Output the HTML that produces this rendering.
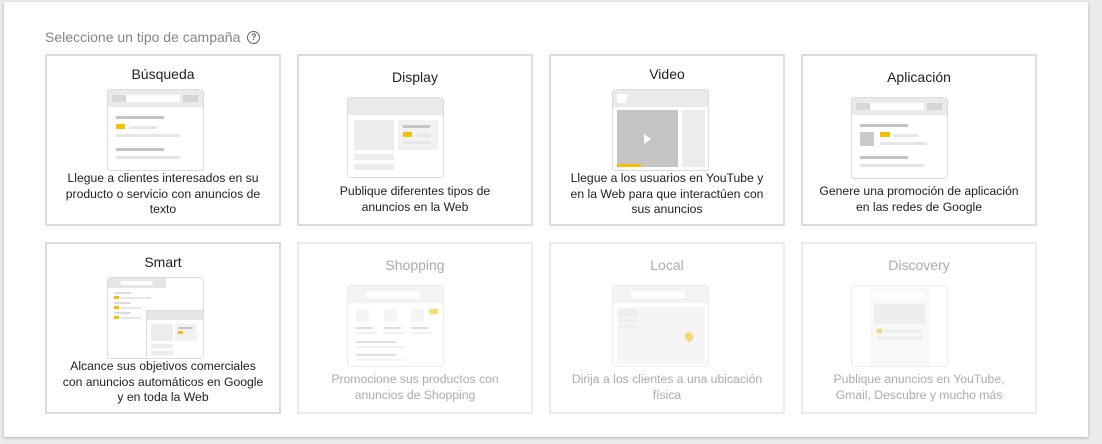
<!DOCTYPE html>
<html><head><meta charset="utf-8"><style>
*{margin:0;padding:0;box-sizing:border-box}
body{width:1102px;height:444px;background:#ebebeb;font-family:"Liberation Sans",Arial,sans-serif;position:relative;overflow:hidden}
.panel{position:absolute;left:4px;top:2px;width:1084px;height:435px;background:#fff;box-shadow:0 1px 3px rgba(0,0,0,.25)}
.lbl{position:absolute;left:45px;top:29px;font-size:14px;color:#80868b}
.q{display:inline-block;width:13px;height:13px;border:1.5px solid #5f6368;border-radius:50%;font-size:9px;line-height:10px;text-align:center;color:#5f6368;font-weight:bold;vertical-align:2px;margin-left:3px}
.card{position:absolute;width:236px;height:172px;border:2px solid #dadce0;background:#fff}
.card.d{border-color:#ececf0}
.t{position:absolute;left:0;right:0;text-align:center;font-size:14px;color:#202124}
.s{position:absolute;left:0;right:0;text-align:center;font-size:12.2px;line-height:15.5px;color:#202124}
.d .t,.d .s{color:#a8abaf}
.ill{position:absolute;width:97px;height:82px;border:1px solid #dadce0;border-radius:3px;background:#fff;overflow:hidden}
.d .ill{border-color:#ececf0}
.ill div{position:absolute}
.hd{left:0;top:0;width:100%;height:17px;background:#e8eaeb}
.g{background:#c4c4c4}.l{background:#e6e6e6}.y{background:#fbbc04}.w{background:#fff}.m{background:#ececec}
.fd div{opacity:.55}
</style></head><body>
<div class="panel"></div>
<div class="lbl">Seleccione un tipo de campaña <span class="q">?</span></div>

<div class="card" style="left:45px;top:54px">
 <div class="t" style="top:10px">Búsqueda</div>
 <div class="ill" style="left:60px;top:33px">
  <div class="hd"></div><div class="g" style="left:4px;top:5px;width:14px;height:7px;opacity:.5"></div>
  <div class="w" style="left:18px;top:5px;width:54px;height:7px"></div><div class="g" style="left:75px;top:5px;width:15px;height:7px;opacity:.6"></div>
  <div class="g" style="left:8px;top:26px;width:48px;height:3px"></div>
  <div class="y" style="left:8px;top:34px;width:9px;height:5px"></div><div class="l" style="left:21px;top:36px;width:28px;height:3px"></div>
  <div class="l" style="left:8px;top:44px;width:64px;height:3px"></div>
  <div class="g" style="left:8px;top:58px;width:48px;height:3px"></div>
  <div class="l" style="left:8px;top:66px;width:64px;height:3px"></div>
 </div>
 <div class="s" style="top:115px">Llegue a clientes interesados en su<br>producto o servicio con anuncios de<br>texto</div>
</div>

<div class="card" style="left:297px;top:54px">
 <div class="t" style="top:13px">Display</div>
 <div class="ill" style="left:48px;top:41px;height:81px">
  <div class="hd"></div>
  <div class="m" style="left:6px;top:22px;width:40px;height:30px"></div>
  <div class="m" style="left:50px;top:22px;width:40px;height:30px;background:#f2f2f2"></div>
  <div class="g" style="left:55px;top:27px;width:27px;height:3px"></div>
  <div class="y" style="left:55px;top:34px;width:9px;height:5px"></div><div class="l" style="left:67px;top:36px;width:15px;height:3px"></div>
  <div class="l" style="left:55px;top:43px;width:27px;height:3px"></div>
  <div class="m" style="left:6px;top:56px;width:40px;height:6px"></div>
  <div class="m" style="left:6px;top:66px;width:40px;height:6px"></div>
 </div>
 <div class="s" style="top:128px">Publique diferentes tipos de<br>anuncios en la Web</div>
</div>

<div class="card" style="left:549px;top:54px">
 <div class="t" style="top:10px">Video</div>
 <div class="ill" style="left:61px;top:33px">
  <div class="hd"></div><div class="w" style="left:4px;top:4px;width:10px;height:9px;border-radius:2px"></div>
  <div class="g" style="left:4px;top:20px;width:61px;height:57px"></div>
  <div style="left:31px;top:44px;width:0;height:0;border-left:7px solid #fff;border-top:5px solid transparent;border-bottom:5px solid transparent"></div>
  <div class="y" style="left:4px;top:74px;width:24px;height:3px"></div>
  <div class="m" style="left:69px;top:20px;width:23px;height:57px"></div>
 </div>
 <div class="s" style="top:115px">Llegue a los usuarios en YouTube y<br>en la Web para que interactúen con<br>sus anuncios</div>
</div>

<div class="card" style="left:801px;top:54px">
 <div class="t" style="top:13px">Aplicación</div>
 <div class="ill" style="left:48px;top:41px">
  <div class="hd"></div><div class="g" style="left:4px;top:5px;width:14px;height:7px;opacity:.5"></div>
  <div class="w" style="left:18px;top:5px;width:54px;height:7px"></div><div class="g" style="left:75px;top:5px;width:15px;height:7px;opacity:.6"></div>
  <div class="g" style="left:8px;top:26px;width:48px;height:3px"></div>
  <div class="g" style="left:8px;top:34px;width:14px;height:14px;opacity:.9"></div>
  <div class="y" style="left:28px;top:34px;width:10px;height:5px"></div><div class="l" style="left:41px;top:36px;width:25px;height:3px"></div>
  <div class="l" style="left:28px;top:44px;width:47px;height:3px"></div>
  <div class="g" style="left:8px;top:58px;width:48px;height:3px"></div>
  <div class="l" style="left:8px;top:66px;width:64px;height:3px"></div>
 </div>
 <div class="s" style="top:128px">Genere una promoción de aplicación<br>en las redes de Google</div>
</div>

<div class="card" style="left:45px;top:242px">
 <div class="t" style="top:10px">Smart</div>
 <div class="ill" style="left:60px;top:33px">
  <div class="l" style="left:0;top:0;width:58px;height:10px"></div>
  <div class="w" style="left:13px;top:3px;width:32px;height:4px"></div>
  <div class="g" style="left:6px;top:14px;width:17px;height:2px;opacity:.6"></div>
  <div class="y" style="left:6px;top:18px;width:5px;height:3px"></div><div class="l" style="left:13px;top:19px;width:30px;height:2px"></div>
  <div class="g" style="left:6px;top:24px;width:17px;height:2px;opacity:.6"></div>
  <div class="y" style="left:6px;top:28px;width:5px;height:3px"></div><div class="l" style="left:13px;top:29px;width:20px;height:2px"></div>
  <div class="g" style="left:6px;top:34px;width:17px;height:2px;opacity:.6"></div>
  <div class="y" style="left:6px;top:38px;width:5px;height:3px"></div><div class="l" style="left:13px;top:39px;width:20px;height:2px"></div>
  <div style="left:38px;top:32px;width:58px;height:50px;border:1px solid #dadce0;background:#fff"></div>
  <div class="l" style="left:39px;top:33px;width:57px;height:9px"></div>
  <div class="m" style="left:43px;top:46px;width:22px;height:17px"></div>
  <div class="m" style="left:67px;top:46px;width:22px;height:17px;background:#f2f2f2"></div>
  <div class="g" style="left:70px;top:49px;width:15px;height:2px"></div>
  <div class="y" style="left:70px;top:53px;width:5px;height:3px"></div>
  <div class="m" style="left:43px;top:66px;width:22px;height:4px"></div>
  <div class="m" style="left:43px;top:73px;width:22px;height:4px"></div>
 </div>
 <div class="s" style="top:115px">Alcance sus objetivos comerciales<br>con anuncios automáticos en Google<br>y en toda la Web</div>
</div>

<div class="card d" style="left:297px;top:242px">
 <div class="t" style="top:13px">Shopping</div>
 <div class="ill fd" style="left:48px;top:41px">
  <div class="hd"></div><div class="w" style="left:18px;top:5px;width:54px;height:7px;opacity:1"></div>
  <div class="m" style="left:8px;top:23px;width:13px;height:13px"></div>
  <div class="m" style="left:36px;top:23px;width:13px;height:13px"></div>
  <div class="m" style="left:63px;top:23px;width:13px;height:13px"></div>
  <div class="y" style="left:81px;top:23px;width:9px;height:5px"></div>
  <div class="g" style="left:8px;top:41px;width:17px;height:2px"></div><div class="l" style="left:8px;top:46px;width:21px;height:2px"></div>
  <div class="g" style="left:36px;top:41px;width:17px;height:2px"></div><div class="l" style="left:36px;top:46px;width:21px;height:2px"></div>
  <div class="g" style="left:63px;top:41px;width:17px;height:2px"></div><div class="l" style="left:63px;top:46px;width:21px;height:2px"></div>
  <div class="g" style="left:8px;top:55px;width:40px;height:2px"></div><div class="l" style="left:8px;top:60px;width:49px;height:2px"></div>
  <div class="g" style="left:8px;top:68px;width:40px;height:2px"></div><div class="l" style="left:8px;top:73px;width:49px;height:2px"></div>
 </div>
 <div class="s" style="top:128px">Promocione sus productos con<br>anuncios de Shopping</div>
</div>

<div class="card d" style="left:549px;top:242px">
 <div class="t" style="top:13px">Local</div>
 <div class="ill fd" style="left:61px;top:41px">
  <div class="hd"></div><div class="w" style="left:18px;top:5px;width:54px;height:7px;opacity:1"></div>
  <div class="m" style="left:4px;top:21px;width:88px;height:57px"></div>
  <div class="l" style="left:6px;top:23px;width:18px;height:7px"></div>
  <div class="l" style="left:6px;top:33px;width:18px;height:3px"></div>
  <div class="l" style="left:6px;top:39px;width:18px;height:3px"></div>
  <div class="y" style="left:72px;top:46px;width:8px;height:9px;border-radius:50% 50% 50% 0;transform:rotate(-45deg)"></div>
 </div>
 <div class="s" style="top:128px">Dirija a los clientes a una ubicación<br>física</div>
</div>

<div class="card d" style="left:801px;top:242px">
 <div class="t" style="top:13px">Discovery</div>
 <div class="ill fd" style="left:48px;top:41px">
  <div class="m" style="left:18px;top:2px;width:60px;height:78px;background:#f2f2f2"></div>
  <div class="w" style="left:22px;top:6px;width:51px;height:7px;opacity:1"></div>
  <div class="l" style="left:22px;top:18px;width:51px;height:20px"></div>
  <div class="y" style="left:25px;top:43px;width:5px;height:4px"></div>
  <div class="l" style="left:33px;top:43px;width:38px;height:4px"></div>
  <div class="l" style="left:25px;top:50px;width:46px;height:4px"></div>
 </div>
 <div class="s" style="top:128px">Publique anuncios en YouTube,<br>Gmail, Descubre y mucho más</div>
</div>
</body></html>
